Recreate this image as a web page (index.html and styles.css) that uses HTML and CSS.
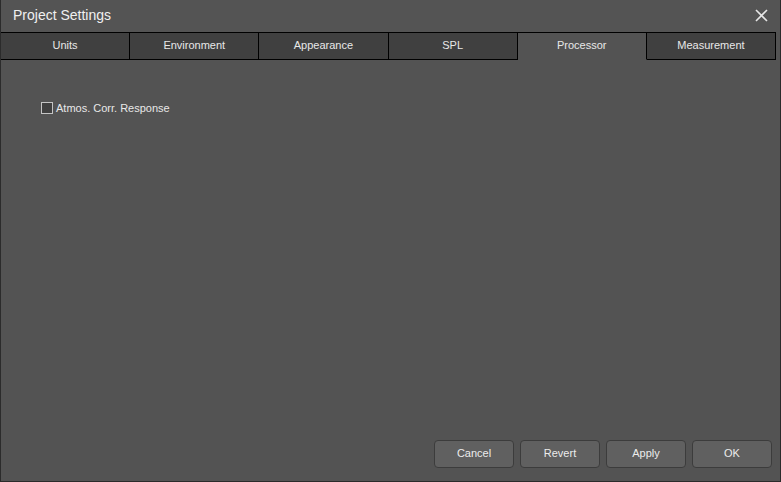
FILE: index.html
```html
<!DOCTYPE html>
<html lang="en">
<head>
  <meta charset="UTF-8" />
  <title>Project Settings</title>
  <link rel="stylesheet" href="styles.css">
</head>
<body>
  <div class="window">
    <div class="titlebar">
      <span class="title">Project Settings</span>
      <button class="close" title="Close">
        <svg width="13" height="13" viewBox="0 0 13 13">
          <path d="M1 1 L12 12 M12 1 L1 12" stroke="#e6e6e6" stroke-width="1.6" fill="none" />
        </svg>
      </button>
    </div>

    <div class="tabs">
      <div class="tab">Units</div>
      <div class="tab">Environment</div>
      <div class="tab">Appearance</div>
      <div class="tab">SPL</div>
      <div class="tab active">Processor</div>
      <div class="tab">Measurement</div>
    </div>

    <div class="content">
      <label class="check">
        <span class="box"></span>
        Atmos. Corr. Response
      </label>
    </div>

    <div class="footer">
      <button class="btn">Cancel</button>
      <button class="btn">Revert</button>
      <button class="btn">Apply</button>
      <button class="btn">OK</button>
    </div>
  </div>
</body>
</html>
```

FILE: styles.css
```css
body {
  margin: 0;
  background: #535353;
  font-family: "Liberation Sans", Arial, sans-serif;
  color: #e4e4e4;
}
.window {
  width: 781px;
  height: 482px;
  box-sizing: border-box;
  border-left: 1px solid #2b2b2b;
  border-right: 1px solid #2b2b2b;
  border-bottom: 1px solid #2b2b2b;
  background: #535353;
  display: flex;
  flex-direction: column;
}
.titlebar {
  height: 32px;
  display: flex;
  align-items: center;
  justify-content: space-between;
  padding: 0 12px 0 12px;
  background: #545454;
}
.title { font-size: 14px; color: #f0f0f0; margin-top: -3px; }
.close {
  background: none;
  border: none;
  padding: 0;
  width: 13px;
  height: 13px;
  cursor: pointer;
  margin-top: -1px;
}
.close svg { display: block; }

.tabs {
  display: flex;
  width: 775px;
  border-top: 1px solid #000;
}
.tab {
  flex: 1;
  height: 26px;
  line-height: 25px;
  text-align: center;
  font-size: 11px;
  color: #e8e8e8;
  background: #404040;
  border-right: 1px solid #000;
  border-bottom: 1px solid #000;
}
.tab.active {
  background: #535353;
  border-bottom-color: transparent;
}

.content {
  flex: 1;
  padding: 42px 40px 0;
}
.check {
  display: flex;
  align-items: center;
  font-size: 11px;
  color: #e8e8e8;
}
.box {
  width: 10px;
  height: 10px;
  border: 1px solid #c4c4c4;
  background: #404040;
  margin-right: 3px;
}

.footer {
  display: flex;
  justify-content: flex-end;
  gap: 6px;
  padding: 0 8px 13px 0;
}
.btn {
  width: 80px;
  height: 28px;
  padding: 0 0 2px;
  background: #606060;
  border: 1px solid #3c3c3c;
  border-radius: 4px;
  color: #ececec;
  font-family: "Liberation Sans", Arial, sans-serif;
  font-size: 11px;
  cursor: pointer;
}
```
